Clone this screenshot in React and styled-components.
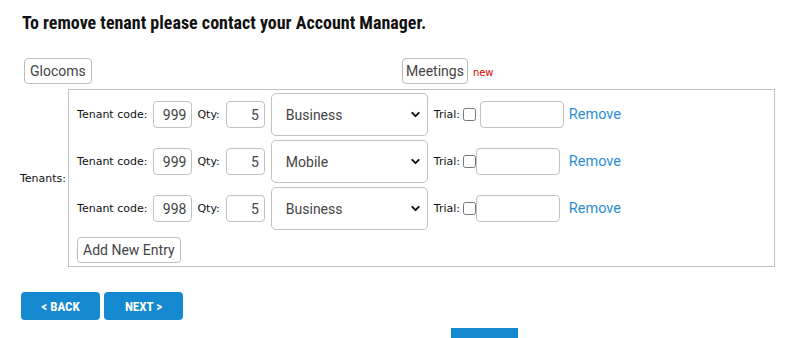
import React from 'react';
import styled, { createGlobalStyle } from 'styled-components';
import { ChevronDown } from 'lucide-react';

const GlobalStyle = createGlobalStyle`
  body {
    margin: 0;
    background: #fff;
    font-family: Roboto, Arial, sans-serif;
  }
`;

const Page = styled.div`
  padding: 13px 0 0 20px;
  width: 773px;
  height: 325px;
  overflow: hidden;
`;

const Title = styled.h3`
  margin: 0 0 0 2px;
  font-family: 'Liberation Sans Narrow', 'Roboto Condensed', Roboto, sans-serif;
  font-stretch: condensed;
  font-size: 18px;
  font-weight: 700;
  line-height: 20px;
  color: #111;
`;

const Toolbar = styled.div`
  display: grid;
  grid-template-columns: 378px auto;
  align-items: center;
  margin-top: 25px;
  padding-left: 4px;
`;

const Cell = styled.div`
  display: flex;
  align-items: center;
  gap: 5px;
`;

const OutlineButton = styled.button`
  height: 26px;
  padding: 0 ${p => (p.$narrow ? '3px' : '5px')};
  border: 1px solid #bdbdbd;
  border-radius: 4px;
  background: #fff;
  font-family: Roboto, Arial, sans-serif;
  font-size: 14px;
  color: #444;
  cursor: pointer;
`;

const NewTag = styled.span`
  font-family: 'DejaVu Sans', Tahoma, sans-serif;
  font-size: 10px;
  color: #e00000;
  margin-top: 2px;
`;

const TenantsRow = styled.div`
  display: flex;
  align-items: center;
  gap: 2px;
  margin-top: 5px;
`;

const Label = styled.span`
  font-family: 'DejaVu Sans', Tahoma, sans-serif;
  font-size: 11px;
  color: #111;
  white-space: nowrap;
`;

const Box = styled.div`
  width: 707px;
  border: 1px solid #c2c2c2;
  padding: 3px 0 3px 8px;
  box-sizing: border-box;
  display: flex;
  flex-direction: column;
  gap: 4px;
`;

const EntryRow = styled.div`
  display: flex;
  align-items: center;
  height: 43px;
`;

const NumInput = styled.input`
  width: 39px;
  height: 27px;
  box-sizing: border-box;
  border: 1px solid #c2c2c2;
  border-radius: 4px;
  padding: 0 5px 0 0;
  text-align: right;
  font-family: Roboto, Arial, sans-serif;
  font-size: 14px;
  color: #444;
  margin: 0 ${p => (p.$tight ? '5px' : '6px')} 0 6px;
`;

const SelectWrap = styled.div`
  position: relative;
  margin-right: 6px;

  svg {
    position: absolute;
    right: 6px;
    top: 15px;
    pointer-events: none;
  }
`;

const Select = styled.select`
  appearance: none;
  width: 157px;
  height: 43px;
  box-sizing: border-box;
  border: 1px solid #c2c2c2;
  border-radius: 5px;
  background: #fff;
  padding: 0 0 0 14px;
  font-family: Roboto, Arial, sans-serif;
  font-size: 14px;
  color: #444;
`;

const TrialGroup = styled.div`
  display: flex;
  align-items: center;
  width: 135px;
`;

const Check = styled.input`
  width: 13px;
  height: 13px;
  margin: 0 ${p => (p.$loose ? '4px' : '0')} 0 3px;
`;

const TextInput = styled.input`
  width: 84px;
  height: 27px;
  box-sizing: border-box;
  border: 1px solid #c2c2c2;
  border-radius: 4px;
`;

const RemoveLink = styled.a`
  font-family: Roboto, Arial, sans-serif;
  font-size: 14.5px;
  color: #2a8dd4;
  text-decoration: none;
  cursor: pointer;
`;

const AddRow = styled.div`
  margin-top: 3px;
`;

const NavRow = styled.div`
  display: flex;
  gap: 4px;
  margin-top: 25px;
  margin-left: 1px;
`;

const NavButton = styled.button`
  width: 79px;
  height: 28px;
  border: none;
  border-radius: 4px;
  background: #1589cf;
  color: #fff;
  font-family: 'Liberation Sans Narrow', 'Roboto Condensed', Roboto, sans-serif;
  font-stretch: condensed;
  font-weight: 700;
  font-size: 13px;
  cursor: pointer;
`;

const BottomBar = styled.div`
  width: 67px;
  height: 14px;
  background: #1589cf;
  margin: 8px 0 0 431px;
`;

const entries = [
  { code: '999', qty: '5', plan: 'Business', loose: true },
  { code: '999', qty: '5', plan: 'Mobile' },
  { code: '998', qty: '5', plan: 'Business' },
];

const Entry = ({ code, qty, plan, loose }) => (
  <EntryRow>
    <Label>Tenant code:</Label>
    <NumInput defaultValue={code} $tight />
    <Label>Qty:</Label>
    <NumInput defaultValue={qty} />
    <SelectWrap>
      <Select defaultValue={plan}>
        <option>Business</option>
        <option>Mobile</option>
      </Select>
      <ChevronDown size={13} strokeWidth={3.5} color="#111" />
    </SelectWrap>
    <TrialGroup>
      <Label>Trial:</Label>
      <Check type="checkbox" $loose={loose} />
      <TextInput />
    </TrialGroup>
    <RemoveLink>Remove</RemoveLink>
  </EntryRow>
);

const App = () => (
  <Page>
    <GlobalStyle />
    <Title>To remove tenant please contact your Account Manager.</Title>
    <Toolbar>
      <Cell>
        <OutlineButton>Glocoms</OutlineButton>
      </Cell>
      <Cell>
        <OutlineButton $narrow>Meetings</OutlineButton>
        <NewTag>new</NewTag>
      </Cell>
    </Toolbar>
    <TenantsRow>
      <Label>Tenants:</Label>
      <Box>
        {entries.map((e, i) => (
          <Entry key={i} {...e} />
        ))}
        <AddRow>
          <OutlineButton>Add New Entry</OutlineButton>
        </AddRow>
      </Box>
    </TenantsRow>
    <NavRow>
      <NavButton>&lt; BACK</NavButton>
      <NavButton>NEXT &gt;</NavButton>
    </NavRow>
    <BottomBar />
  </Page>
);

export default App;
